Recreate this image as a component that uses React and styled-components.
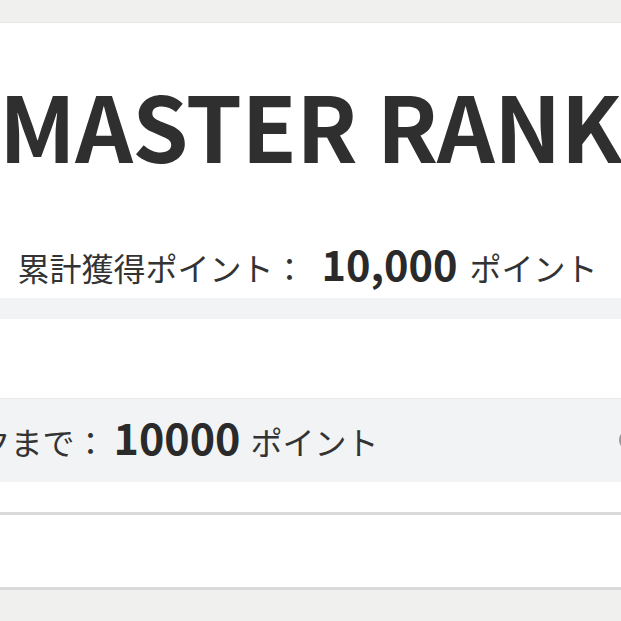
import React from "react";
import styled, { createGlobalStyle } from "styled-components";

const GlobalStyle = createGlobalStyle`
  html, body {
    margin: 0;
    padding: 0;
    background: #f0f0ee;
  }
  body {
    font-family: "Noto Sans CJK JP", "Noto Sans", sans-serif;
    color: #2f2f2f;
  }
`;

// the page is wider than the window: the screenshot shows its middle part
const Viewport = styled.div`
  width: 100vw;
  height: 100vh;
  overflow: hidden;
  display: flex;
  justify-content: center;
  align-items: flex-start;
  background: #f0f0ee;
`;

const Page = styled.div`
  flex: 0 0 940px;
  width: 940px;
  display: flex;
  flex-direction: column;
`;

const TopBar = styled.div`
  height: 22px;
  background: #f0f0ee;
  border-bottom: 1px solid #e6e6e3;
`;

const RankCard = styled.section`
  background: #ffffff;
  display: flex;
  flex-direction: column;
  align-items: center;
  padding-top: 56px;
  height: 219px;
`;

const RankTitle = styled.h1`
  margin: 0;
  font-size: 90px;
  font-weight: 700;
  line-height: 1;
  letter-spacing: -0.6px;
  color: #2f2f2f;
`;

const TotalLine = styled.p`
  margin: 74px 0 0;
  padding-right: 6px;
  display: flex;
  align-items: baseline;
  font-size: 32px;
  line-height: 1;
  color: #333;
`;

const Number = styled.strong`
  font-size: ${(p) => p.$size}px;
  font-weight: 700;
  margin: 0 ${(p) => p.$after}px 0 ${(p) => p.$before}px;
  color: #2a2a2a;
`;

const Band = styled.div`
  height: 21px;
  background: #f2f3f5;
`;

const Section = styled.section`
  background: #ffffff;
  padding-top: 79px;
  padding-bottom: 30px;
`;

const NextRankBox = styled.div`
  height: 75px;
  background: #f2f3f5;
  border-top: 1px solid #e9eaec;
  display: flex;
  align-items: center;
  justify-content: space-between;
  padding: 0 140px 8px 10px;
`;

const NextLabel = styled.p`
  margin: 0;
  display: flex;
  align-items: baseline;
  font-size: 32px;
  line-height: 1;
  color: #333;
`;

const HelpIcon = styled.span`
  width: 22px;
  height: 22px;
  margin-top: 6px;
  border-radius: 50%;
  border: 2px solid #9a9a9a;
  box-sizing: border-box;
  flex: 0 0 auto;
`;

const Divider = styled.div`
  height: 3px;
  background: #d9d9d9;
`;

const Empty = styled.div`
  height: 72px;
  background: #ffffff;
`;

const Footer = styled.div`
  flex: 1;
  min-height: 40px;
  background: #f0f0ee;
`;

export default function App() {
  return (
    <>
      <GlobalStyle />
      <Viewport>
        <Page>
          <TopBar />
          <RankCard>
            <RankTitle>MASTER RANK</RankTitle>
            <TotalLine>
              累計獲得ポイント：
              <Number $size={41.5} $before={16} $after={12}>
                10,000
              </Number>
              ポイント
            </TotalLine>
          </RankCard>
          <Band />
          <Section>
            <NextRankBox>
              <NextLabel>
                次のランクまで：
                <Number $size={43} $before={7} $after={10}>
                  10000
                </Number>
                ポイント
              </NextLabel>
              <HelpIcon />
            </NextRankBox>
          </Section>
          <Divider />
          <Empty />
          <Divider />
          <Footer />
        </Page>
      </Viewport>
    </>
  );
}
